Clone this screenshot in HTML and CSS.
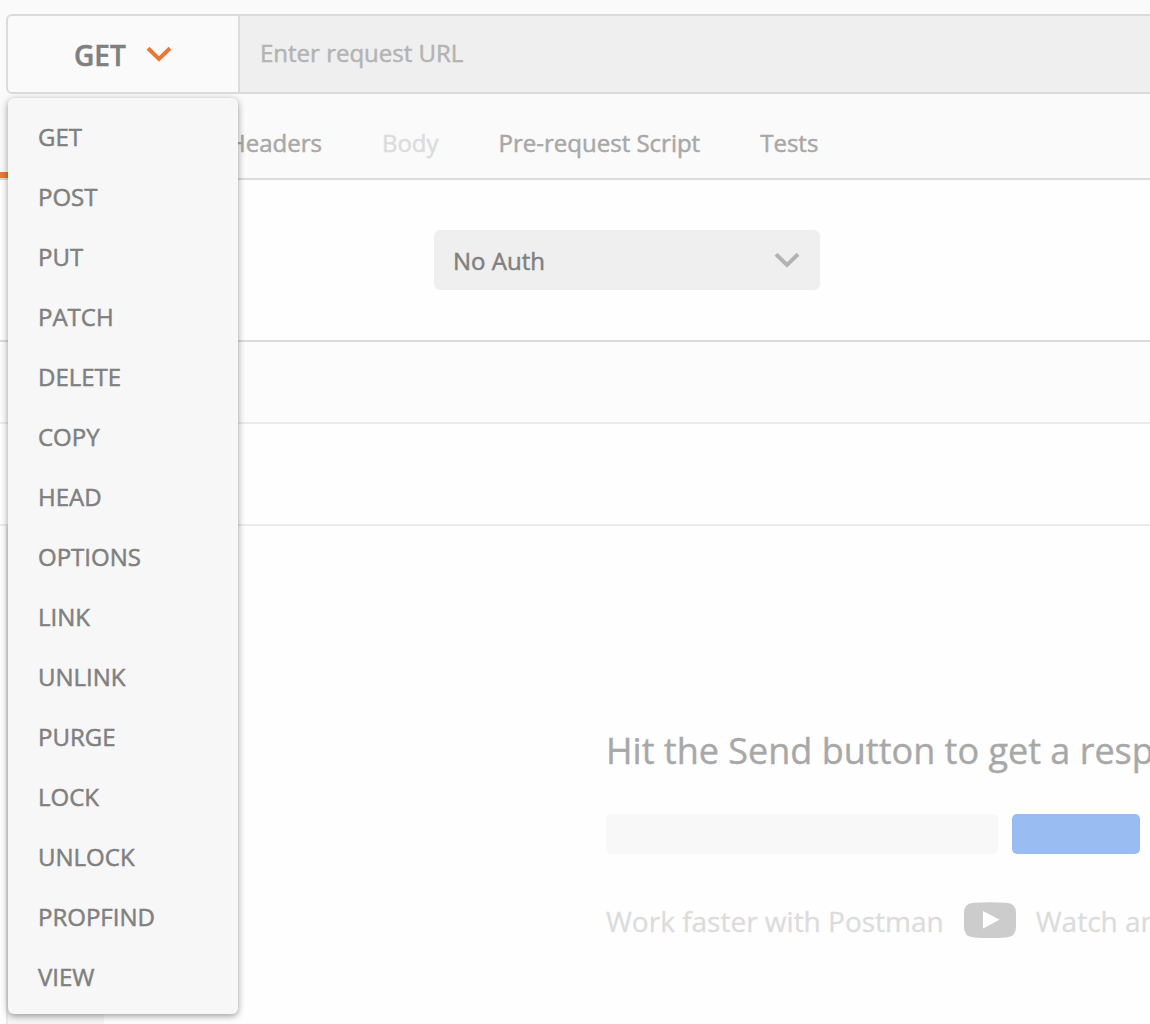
FILE: index.html
```html
<!DOCTYPE html>
<html lang="en">
<head>
<meta charset="utf-8">
<title>Request builder</title>
<link rel="stylesheet" href="styles.css">
</head>
<body>
<main class="app">
  <header class="request">
    <div class="method">
      <span class="method-name">GET</span>
      <svg class="chevron" width="26" height="18" viewBox="0 0 26 18"><path d="M2 3.2 13 14 24 3.2" fill="none" stroke="currentColor" stroke-width="4"/></svg>
      <ul class="menu">
        <li>GET</li>
        <li>POST</li>
        <li>PUT</li>
        <li>PATCH</li>
        <li>DELETE</li>
        <li>COPY</li>
        <li>HEAD</li>
        <li>OPTIONS</li>
        <li>LINK</li>
        <li>UNLINK</li>
        <li>PURGE</li>
        <li>LOCK</li>
        <li>UNLOCK</li>
        <li>PROPFIND</li>
        <li>VIEW</li>
      </ul>
    </div>
    <div class="url">Enter request URL</div>
  </header>
  <nav class="tabs">
    <span class="tab-active"></span>
    <span class="tab">Headers</span>
    <span class="tab disabled">Body</span>
    <span class="tab">Pre-request Script</span>
    <span class="tab">Tests</span>
  </nav>
  <section class="auth">
    <div class="select">
      <span>No Auth</span>
      <svg class="chevron" width="26" height="18" viewBox="0 0 26 18"><path d="M2 2.2 13 13 24 2.2" fill="none" stroke="currentColor" stroke-width="4"/></svg>
    </div>
  </section>
  <div class="strip"></div>
  <div class="row"></div>
  <section class="response">
    <div class="side"></div>
    <div class="empty">
      <h1 class="title">Hit the Send button to get a response.</h1>
      <div class="blocks">
        <span class="block-input"></span>
        <span class="block-button"></span>
      </div>
      <div class="learn">
        <span class="learn-text">Work faster with Postman</span>
        <svg class="video" width="52" height="36" viewBox="0 0 52 36"><path d="M10 .8Q26-.5 42 .8Q52 1 52 11V25Q52 35 42 35.4Q26 36.5 10 35.4Q0 35 0 25V11Q0 1 10 .8Z" fill="#ccc"/><path d="M19 9 35.5 17.7 19 26.5Z" fill="#fff"/></svg>
        <span class="learn-text">Watch and learn</span>
      </div>
    </div>
  </section>
</main>
</body>
</html>
```
FILE: styles.css
```css
* { box-sizing: border-box; }
body {
  margin: 0;
  font-family: "Open Sans", "Noto Sans", sans-serif;
  font-size: 24px;
  line-height: 34px;
  color: #808080;
  background: #fefefe;
}
.app {
  width: 1150px;
  height: 1024px;
  overflow: hidden;
  display: flex;
  flex-direction: column;
  white-space: nowrap;
}
.request {
  flex: none;
  display: flex;
  height: 94px;
  padding: 14px 0 0 6px;
  background: #fafafa;
}
.method {
  position: relative;
  width: 234px;
  flex: none;
  display: flex;
  align-items: center;
  padding-left: 66px;
  gap: 20px;
  border: 2px solid #dbdbdb;
  border-radius: 6px 0 0 6px;
}
.method-name {
  font-size: 28px;
  font-weight: 600;
  -webkit-text-stroke: .5px;
  padding-top: 1px;
}
.method .chevron { color: #e97836; }
.menu {
  position: absolute;
  z-index: 2;
  left: 0;
  top: 82px;
  width: 230px;
  height: 916px;
  margin: 0;
  padding: 9px 30px;
  list-style: none;
  background: #f7f7f7;
  border-radius: 6px;
  box-shadow: 0 2px 7px rgba(0, 0, 0, .4);
}
.menu li {
  height: 60px;
  line-height: 60px;
}
.menu li, .tab, .url, .select { -webkit-text-stroke: .5px; }
.url {
  flex: 1;
  padding: 20px 20px 0;
  color: #b3b3b3;
  background: #efefef;
  border: solid #dbdbdb;
  border-width: 2px 0;
}
.tabs {
  flex: none;
  display: flex;
  gap: 60px;
  height: 86px;
  padding-top: 32px;
  color: #a8a8a8;
  background: #fafafa;
  border-bottom: 2px solid #dbdbdb;
}
.tab-active {
  width: 168px;
  height: 6px;
  margin-top: 46px;
  background: #e97836;
}
.disabled { color: #dcdcdc; }
.auth {
  flex: none;
  height: 162px;
  padding: 50px 0 0 434px;
  border-bottom: 2px solid #dbdbdb;
}
.select {
  display: flex;
  align-items: center;
  justify-content: space-between;
  width: 386px;
  height: 60px;
  padding: 2px 20px 0 19px;
  background: #efefef;
  border-radius: 6px;
}
.select .chevron { color: #b3b3b3; }
.strip {
  flex: none;
  height: 82px;
  background: #fcfcfc;
  border-bottom: 2px solid #ebebeb;
}
.row {
  flex: none;
  height: 102px;
  border-bottom: 2px solid #ebebeb;
}
.response {
  flex: 1;
  display: flex;
  padding-left: 6px;
}
.side {
  width: 98px;
  flex: none;
  background: #f5f5f5;
  border-left: 2px solid #e8e8e8;
}
.empty { padding: 199px 0 0 502px; }
.title {
  margin: 0;
  font-size: 36px;
  font-weight: 400;
  line-height: 52px;
  color: #a8a8a8;
  -webkit-text-stroke: .4px;
}
.blocks {
  display: flex;
  gap: 14px;
  margin-top: 37px;
}
.block-input, .block-button {
  height: 40px;
  border-radius: 5px;
}
.block-input { width: 392px; background: #f8f8f8; }
.block-button { width: 128px; background: #99bdf2; }
.learn {
  display: flex;
  align-items: center;
  gap: 20px;
  margin-top: 45px;
  font-size: 28px;
  line-height: 40px;
  color: #dcdcdc;
  -webkit-text-stroke: .3px;
}
.learn-text { padding-top: 2px; }
```
